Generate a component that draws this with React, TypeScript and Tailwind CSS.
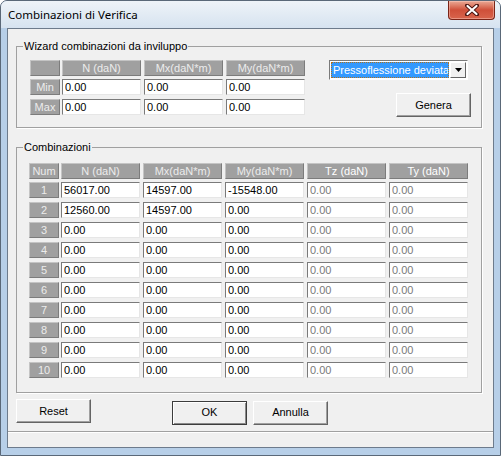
import React from "react";

const rows = [
  ["56017.00", "14597.00", "-15548.00", "0.00", "0.00"],
  ["12560.00", "14597.00", "0.00", "0.00", "0.00"],
  ...Array(8).fill(["0.00", "0.00", "0.00", "0.00", "0.00"]),
];

const Label = ({ children, wide }: any) => (
  <div
    className={`${wide ? "w-[79px]" : "w-[30px]"} h-[16px] shrink-0 bg-[#a0a0a0] border border-t-[#c4c4c4] border-l-[#c4c4c4] border-r-[#7c7c7c] border-b-[#7c7c7c] text-[11px] leading-[14px] text-center text-[#ececec]`}
  >
    {children}
  </div>
);

const Cell = ({ value, disabled }: any) => (
  <input
    readOnly
    value={value}
    className={`w-[79px] h-[16px] shrink-0 bg-white border border-t-[#7a7a7a] border-l-[#7a7a7a] border-r-[#e6e6e6] border-b-[#e6e6e6] px-[2px] text-[11px] leading-[14px] outline-none ${
      disabled ? "text-[#7a7a7a]" : "text-black"
    }`}
  />
);

const Btn = ({ children, def, w }: any) => (
  <button
    className={`${w || "w-[75px]"} h-[24px] bg-[#f0f0f0] text-[11px] text-black ${
      def
        ? "border border-[#3c3c3c] shadow-[inset_1px_1px_0_#ffffff,inset_-1px_-1px_0_#8a8a8a]"
        : "border border-t-white border-l-white border-r-[#646464] border-b-[#646464] shadow-[inset_-1px_-1px_0_#a0a0a0]"
    }`}
  >
    {children}
  </button>
);

const CloseButton = () => (
  <div className="w-[47px] h-[19px] mr-[5px] rounded-b-[4px] border border-t-0 border-[#7a2417] bg-gradient-to-b from-[#e9a995] via-[#cf4f39] to-[#d8644c] flex items-center justify-center shadow-[inset_0_0_0_1px_rgba(255,210,200,0.45)]">
    <svg width="14" height="12" viewBox="0 0 14 12">
      <path d="M2 1.5 L12 10.5 M12 1.5 L2 10.5" stroke="#4a1410" strokeWidth="4" strokeLinecap="round" />
      <path d="M2.5 2 L11.5 10 M11.5 2 L2.5 10" stroke="#ffffff" strokeWidth="2.2" strokeLinecap="round" />
    </svg>
  </div>
);

export default function App() {
  return (
    <div className="w-[501px] h-[456px] bg-[#b7cfe8] border border-[#5a6878] rounded-t-[7px] flex flex-col overflow-hidden font-['Liberation_Sans',Arial,sans-serif]">
      {/* title bar */}
      <div className="h-[27px] shrink-0 flex items-start justify-between bg-gradient-to-b from-[#eef3f8] to-[#d6e3f0]">
        <span className="pl-[7px] pt-[6px] text-[11.5px] leading-[16px] text-black font-['Noto_Sans',sans-serif]">
          Combinazioni di Verifica
        </span>
        <CloseButton />
      </div>

      {/* client area */}
      <div className="mx-[6px] mb-[7px] flex-1 border border-[#6d7b8c] bg-[#f0f0f0] flex flex-col">
        <fieldset className="ml-[8px] mt-[10px] w-[466px] border border-[#a0a0a0] shadow-[1px_1px_0_#ffffff]">
          <legend className="ml-[6px] px-[1px] text-[11px] leading-[14px] text-black">
            Wizard combinazioni da inviluppo
          </legend>
          <div className="flex pl-[13px] pt-[7px] pb-[10px]">
            <div className="flex flex-col">
              <div className="flex gap-[3px]">
                <div className="mr-[-1px] flex">
                  <Label />
                </div>
                <Label wide>N (daN)</Label>
                <Label wide>Mx(daN*m)</Label>
                <Label wide>My(daN*m)</Label>
              </div>
              <div className="flex flex-col gap-[4px] mt-[3px]">
                {["Min", "Max"].map((r) => (
                  <div key={r} className="flex gap-[3px]">
                    <div className="mr-[-1px] flex">
                      <Label>{r}</Label>
                    </div>
                    <Cell value="0.00" />
                    <Cell value="0.00" />
                    <Cell value="0.00" />
                  </div>
                ))}
              </div>
            </div>
            <div className="ml-[24px] w-[142px] flex flex-col">
              <div className="w-[139px] h-[20px] flex border border-t-[#7a7a7a] border-l-[#7a7a7a] border-r-white border-b-white bg-white p-[1px]">
                <div className="flex-1 bg-[#3399ff] border border-dotted border-[#b0701c] text-white text-[11px] leading-[14px] pl-[1px] whitespace-nowrap overflow-hidden">
                  Pressoflessione deviata
                </div>
                <div className="w-[16px] ml-[1px] bg-[#f0f0f0] border border-t-white border-l-white border-r-[#646464] border-b-[#646464] flex items-center justify-center">
                  <svg width="7" height="4" viewBox="0 0 7 4">
                    <path d="M0 0 H7 L3.5 4 Z" fill="#000" />
                  </svg>
                </div>
              </div>
              <div className="self-end mt-[12px]">
                <Btn>Genera</Btn>
              </div>
            </div>
          </div>
        </fieldset>

        <fieldset className="ml-[8px] mt-[12px] w-[466px] border border-[#a0a0a0] shadow-[1px_1px_0_#ffffff]">
          <legend className="ml-[6px] px-[1px] text-[11px] leading-[14px] text-black">
            Combinazioni
          </legend>
          <div className="flex flex-col pl-[12px] pt-[9px] pb-[14px]">
            <div className="flex gap-[3px]">
              <div className="mr-[-1px] flex">
                <Label>Num</Label>
              </div>
              <Label wide>N (daN)</Label>
              <Label wide>Mx(daN*m)</Label>
              <Label wide>My(daN*m)</Label>
              <div className="w-[79px] h-[16px] bg-[#a0a0a0] border border-t-[#c4c4c4] border-l-[#c4c4c4] border-r-[#7c7c7c] border-b-[#7c7c7c] text-[11px] leading-[14px] text-center text-white">
                Tz (daN)
              </div>
              <div className="w-[79px] h-[16px] bg-[#a0a0a0] border border-t-[#c4c4c4] border-l-[#c4c4c4] border-r-[#7c7c7c] border-b-[#7c7c7c] text-[11px] leading-[14px] text-center text-white">
                Ty (daN)
              </div>
            </div>
            <div className="flex flex-col gap-[4px] mt-[3px]">
              {rows.map((r: string[], i: number) => (
                <div key={i} className="flex gap-[3px]">
                  <div className="mr-[-1px] flex">
                    <Label>{i + 1}</Label>
                  </div>
                  {r.map((v, j) => (
                    <Cell key={j} value={v} disabled={j > 2} />
                  ))}
                </div>
              ))}
            </div>
          </div>
        </fieldset>

        <div className="flex mt-[6px] pl-[8px]">
          <Btn>Reset</Btn>
          <div className="ml-[81px]">
            <Btn def>OK</Btn>
          </div>
          <div className="ml-[6px]">
            <Btn>Annulla</Btn>
          </div>
        </div>

        <div className="mt-[6px] flex-1 border-t border-[#a0a0a0] shadow-[inset_0_1px_0_#ffffff]" />
      </div>
    </div>
  );
}
